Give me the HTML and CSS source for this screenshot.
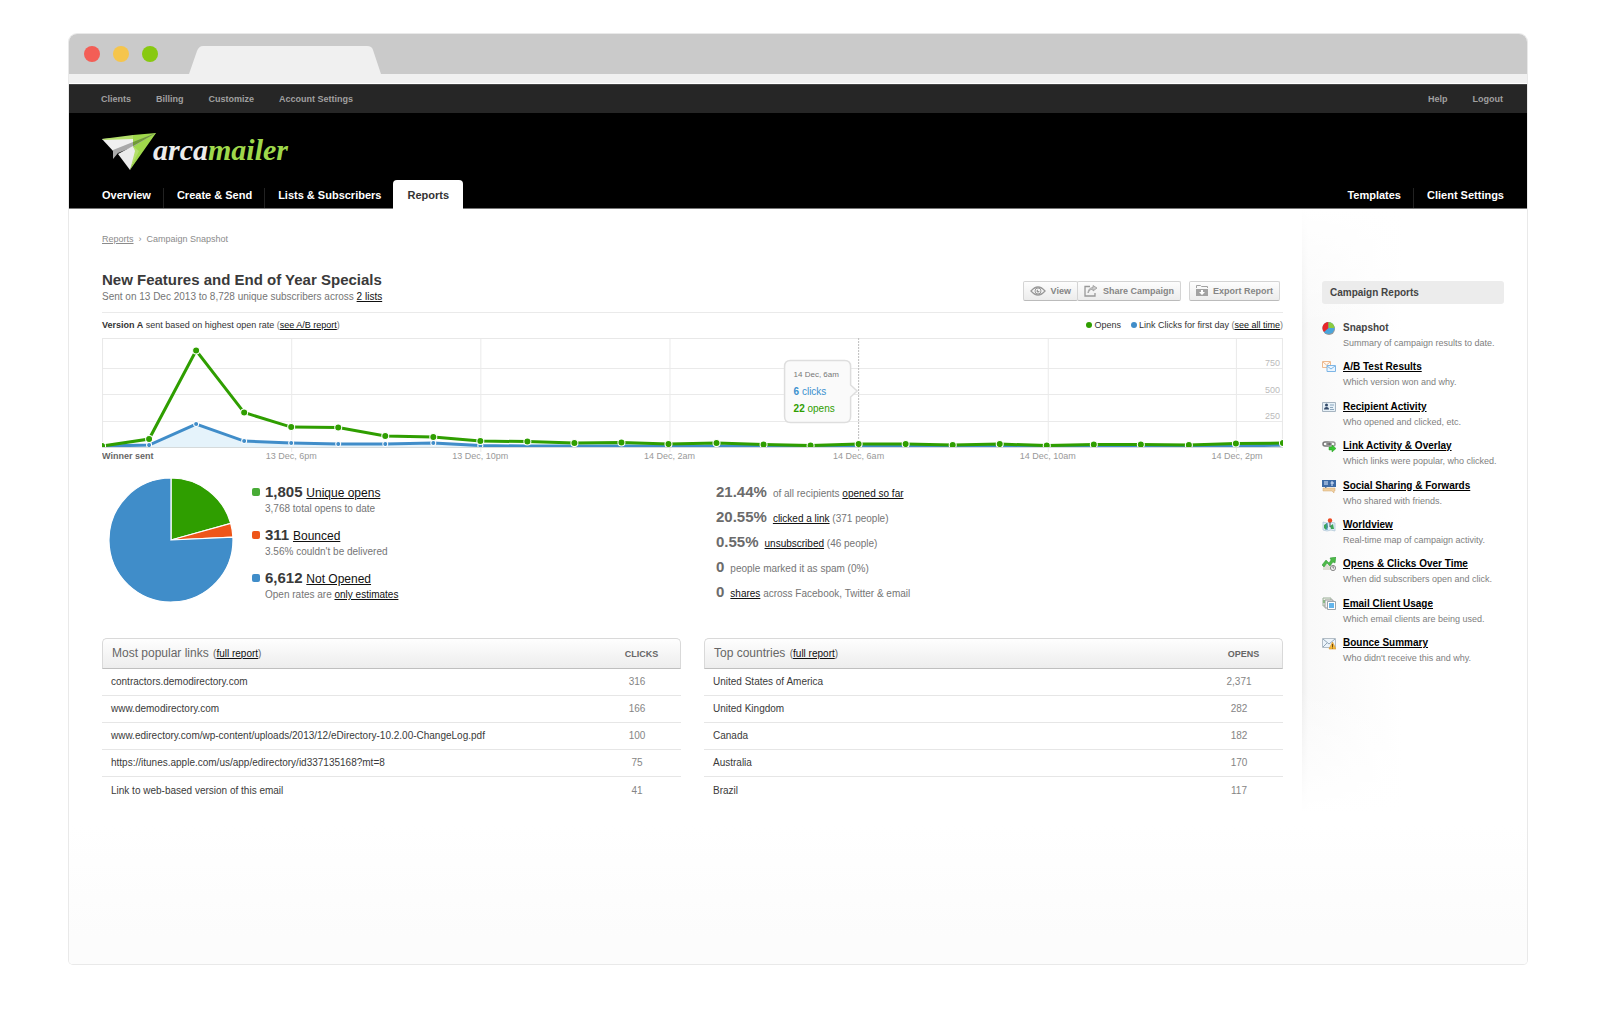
FILE: index.html
```html
<!DOCTYPE html>
<html lang="en">
<head>
<meta charset="utf-8">
<title>Campaign Snapshot</title>
<link rel="stylesheet" href="styles.css">
</head>
<body>
<div class="window">
  <div class="chrome">
    <span class="light light-red"></span>
    <span class="light light-yellow"></span>
    <span class="light light-green"></span>
    <svg class="chrome-tab" width="192" height="28" viewBox="0 0 192 28" aria-hidden="true"><path d="M0 28 8 5Q10 0 14 0H178Q183 0 184 4L192 28Z" fill="#f0f0f0"/></svg>
  </div>
  <div class="toolbar"></div>

  <header class="header">
    <nav class="account" aria-label="Account">
      <div class="account-group"><a href="#">Clients</a><a href="#">Billing</a><a href="#">Customize</a><a href="#">Account Settings</a></div>
      <div class="account-group"><a href="#">Help</a><a href="#">Logout</a></div>
    </nav>
    <a class="logo" href="#">
      <svg width="54" height="38" viewBox="0 0 54 38" aria-hidden="true">
        <path d="M0 6 31 4V14L12 19Z" fill="#f0f0f0"/>
        <path d="M0 6 31 2V6L2 7Z" fill="#b4df6b"/>
        <path d="M31 2 54 0 39 16 31 13Z" fill="#9fd84b"/>
        <path d="M11 17 31 9 54 0 31 14 16 20 11 26Z" fill="#a9a9a9"/>
        <path d="M16 21 31 13 35 18 28 37Z" fill="#ececec"/>
        <path d="M54 0 31 14 36 18 28 37Z" fill="#9fd84b"/>
        <path d="M31 13 37 18 28 37 33 18Z" fill="#b4df6b"/>
        <path d="M54 0 31 9V13Z" fill="#6f9a35"/>
      </svg>
      <span class="logo-text">arca<span class="logo-green">mailer</span></span>
    </a>
    <nav class="tabs" aria-label="Main">
      <div class="tab-group"><a href="#">Overview</a><a href="#">Create &amp; Send</a><a href="#">Lists &amp; Subscribers</a><a class="active" href="#">Reports</a></div>
      <div class="tab-group"><a href="#">Templates</a><a href="#">Client Settings</a></div>
    </nav>
  </header>

  <div class="page">
    <main class="main">
      <div class="crumbs"><a href="#">Reports</a><span class="crumb-arrow">›</span><span>Campaign Snapshot</span></div>

      <div class="heading">
        <div>
          <h1>New Features and End of Year Specials</h1>
          <p class="sent">Sent on 13 Dec 2013 to 8,728 unique subscribers across <a href="#">2 lists</a></p>
        </div>
        <div class="actions">
          <div class="button-pair">
            <button type="button"><svg width="16" height="12" viewBox="0 0 16 12" fill="none" stroke="#999" aria-hidden="true"><path d="M1 6Q8-2 15 6Q8 14 1 6Z" stroke-width="1.3"/><circle cx="8" cy="6" r="3"/><path d="M8 4.500A1.500 1.500 0 1 0 9.500 6H8Z" fill="#999" stroke="none"/></svg>View</button>
            <button type="button"><svg width="14" height="12" viewBox="0 0 14 12" fill="none" stroke="#999" stroke-width="1.300" aria-hidden="true"><path d="M6 1.500H1V11H11V8"/><path d="M4 8Q5 4 9 4V6L13 3 9 .5V2.500Q4 3 4 8Z" fill="#ccc" stroke-width=".8"/></svg>Share Campaign</button>
          </div>
          <button type="button"><svg width="12" height="12" viewBox="0 0 12 12" aria-hidden="true"><path d="M.5 3V.5H4.500L5.500 1.500H11.500V3" fill="none" stroke="#a2a2a2"/><path d="M0 4H12V11H0Z" fill="#a2a2a2"/><path d="M5 5H7V7H9L6 10 3 7H5Z" fill="#fff"/></svg>Export Report</button>
        </div>
      </div>

      <section class="chart">
        <div class="chart-head">
          <span><b>Version A</b> sent based on highest open rate <i>(</i><a href="#">see A/B report</a><i>)</i></span>
          <span class="chart-key"><span><span class="dot dot-green"></span>Opens</span><span><span class="dot dot-blue"></span>Link Clicks for first day <i>(</i><a href="#">see all time</a><i>)</i></span></span>
        </div>
        <svg class="plot" viewBox="0 0 1180 124" role="img" aria-label="Opens and link clicks over time">
          <defs>
            <clipPath id="area"><path d="M0 0H1180V109H0Z"/></clipPath>
          </defs>
          <path d="M0 30.500H1180M0 56.500H1180M0 83.500H1180M189.500 0V114M378.500 0V114M567.500 0V114M945.500 0V114M1133.500 0V114" stroke="#eaeaea" fill="none"/>
          <path d="M.5 109V.5H1179.500V109" stroke="#e8e8e8" fill="none"/>
          <path d="M0 109H1180" stroke="#d5dadb" stroke-width="2"/>
          <path d="M756 0V114" stroke="#bdbdbd" stroke-dasharray="2 1"/>
          <g class="axis" text-anchor="end"><text x="1177" y="28">750</text><text x="1177" y="55">500</text><text x="1177" y="81">250</text></g>
          <g clip-path="url(#area)">
            <path d="M0 108 47 107 94 86 142 103 189 105 236 106 283 106 331 105 378 107 472 108V109H0Z" fill="#e5f3fb"/>
            <path class="clicks" d="M0 108 47 107 94 86 142 103 189 105 236 106 283 106 331 105 378 107.500 425 108 1133 108 1180 107"/>
            <g class="click-dots"><circle cx="47" cy="107" r="2.500"/><circle cx="94" cy="86" r="2.500"/><circle cx="142" cy="103" r="2.500"/><circle cx="189" cy="105" r="2.500"/><circle cx="236" cy="106" r="2.500"/><circle cx="283" cy="106" r="2.500"/><circle cx="331" cy="105" r="2.500"/><circle cx="378" cy="107.500" r="2.500"/></g>
            <path class="opens" d="M0 108 47 101 94 12.500 142 74.500 189 89 236 89.500 283 98 331 99 378 103 425 103.500 472 105 519 104.500 566 106 614 105 661 106.500 708 107.500 756 106 803 106 850 107 897 106 944 107.500 991 106.500 1038 106.500 1086 107 1133 105.500 1180 105"/>
            <g class="open-dots"><circle cx="0" cy="108" r="3.500"/><circle cx="47" cy="101" r="3.500"/><circle cx="94" cy="12.500" r="3.500"/><circle cx="142" cy="74.500" r="3.500"/><circle cx="189" cy="89" r="3.500"/><circle cx="236" cy="89.500" r="3.500"/><circle cx="283" cy="98" r="3.500"/><circle cx="331" cy="99" r="3.500"/><circle cx="378" cy="103" r="3.500"/><circle cx="425" cy="103.500" r="3.500"/><circle cx="472" cy="105" r="3.500"/><circle cx="519" cy="104.500" r="3.500"/><circle cx="566" cy="106" r="3.500"/><circle cx="614" cy="105" r="3.500"/><circle cx="661" cy="106.500" r="3.500"/><circle cx="708" cy="107.500" r="3.500"/><circle cx="756" cy="106" r="3.500"/><circle cx="803" cy="106" r="3.500"/><circle cx="850" cy="107" r="3.500"/><circle cx="897" cy="106" r="3.500"/><circle cx="944" cy="107.500" r="3.500"/><circle cx="991" cy="106.500" r="3.500"/><circle cx="1038" cy="106.500" r="3.500"/><circle cx="1086" cy="107" r="3.500"/><circle cx="1133" cy="105.500" r="3.500"/><circle cx="1180" cy="105" r="3.500"/></g>
          </g>
          <g class="ticks" text-anchor="middle"><text x="189" y="121">13 Dec, 6pm</text><text x="378" y="121">13 Dec, 10pm</text><text x="567" y="121">14 Dec, 2am</text><text x="756" y="121">14 Dec, 6am</text><text x="945" y="121">14 Dec, 10am</text><text x="1134" y="121">14 Dec, 2pm</text></g>
          <text class="winner" x="0" y="121">Winner sent</text>
          <path d="M687 22.500H742Q748 22.500 748 28.500V47L754.500 53 748 59V78.500Q748 84.500 742 84.500H688Q682 84.500 682 78.500V28.500Q682 22.500 688 22.500Z" fill="#fafafa" stroke="#dedede" stroke-width="1.500"/>
          <text class="tip-date" x="691" y="39">14 Dec, 6am</text>
          <text class="tip-clicks" x="691" y="57"><tspan font-weight="bold">6</tspan> clicks</text>
          <text class="tip-opens" x="691" y="74"><tspan font-weight="bold">22</tspan> opens</text>
        </svg>
      </section>

      <section class="summary">
        <div class="recipients">
          <svg class="pie" width="126" height="126" viewBox="0 0 126 126" stroke="#fff" stroke-width="1.200" role="img" aria-label="Recipient breakdown">
            <path d="M63 63V1A62 62 0 0 1 122.700 46.400Z" fill="#2f9e00"/>
            <path d="M63 63 122.700 46.400A62 62 0 0 1 124.900 60.100Z" fill="#ee5519"/>
            <path d="M63 63 124.900 60.100A62 62 0 1 1 63 1Z" fill="#408dc9"/>
          </svg>
          <ul class="legend">
            <li><span class="swatch swatch-green"></span><div><b>1,805</b> <a href="#">Unique opens</a><p>3,768 total opens to date</p></div></li>
            <li><span class="swatch swatch-orange"></span><div><b>311</b> <a href="#">Bounced</a><p>3.56% couldn't be delivered</p></div></li>
            <li><span class="swatch swatch-blue"></span><div><b>6,612</b> <a href="#">Not Opened</a><p>Open rates are <a href="#">only estimates</a></p></div></li>
          </ul>
        </div>
        <ul class="stats">
          <li><b>21.44%</b><span>of all recipients <a href="#">opened so far</a></span></li>
          <li><b>20.55%</b><span><a href="#">clicked a link</a> (371 people)</span></li>
          <li><b>0.55%</b><span><a href="#">unsubscribed</a> (46 people)</span></li>
          <li><b>0</b><span>people marked it as spam (0%)</span></li>
          <li><b>0</b><span><a href="#">shares</a> across Facebook, Twitter &amp; email</span></li>
        </ul>
      </section>

      <div class="tables">
        <table>
          <thead><tr><th scope="col">Most popular links <small>(<a href="#">full report</a>)</small></th><th scope="col" class="count">CLICKS</th></tr></thead>
          <tbody>
            <tr><td>contractors.demodirectory.com</td><td>316</td></tr>
            <tr><td>www.demodirectory.com</td><td>166</td></tr>
            <tr><td>www.edirectory.com/wp-content/uploads/2013/12/eDirectory-10.2.00-ChangeLog.pdf</td><td>100</td></tr>
            <tr><td>https://itunes.apple.com/us/app/edirectory/id337135168?mt=8</td><td>75</td></tr>
            <tr><td>Link to web-based version of this email</td><td>41</td></tr>
          </tbody>
        </table>
        <table>
          <thead><tr><th scope="col">Top countries <small>(<a href="#">full report</a>)</small></th><th scope="col" class="count">OPENS</th></tr></thead>
          <tbody>
            <tr><td>United States of America</td><td>2,371</td></tr>
            <tr><td>United Kingdom</td><td>282</td></tr>
            <tr><td>Canada</td><td>182</td></tr>
            <tr><td>Australia</td><td>170</td></tr>
            <tr><td>Brazil</td><td>117</td></tr>
          </tbody>
        </table>
      </div>
    </main>

    <aside class="sidebar">
      <h2>Campaign Reports</h2>
      <ul class="reports">
        <li>
          <svg width="14" height="14" viewBox="0 0 14 14" aria-hidden="true"><ellipse cx="7" cy="8" rx="6" ry="6" fill="#999"/><circle cx="6.500" cy="7" r="6" fill="#4aa5dc"/><path d="M6.500 7V1A6 6 0 0 0 2 11Z" fill="#e8262a"/><path d="M6.500 7V1A6 6 0 0 1 12.500 7Z" fill="#8ccb3f"/></svg>
          <div><span class="current">Snapshot</span><p>Summary of campaign results to date.</p></div>
        </li>
        <li>
          <svg width="14" height="14" viewBox="0 0 14 14" fill="none" aria-hidden="true"><path d="M.5 1.500H8.500V7.500H.5Z" fill="#fff8f1" stroke="#edb98f"/><path d="M1 2 4.500 5 8 2" stroke="#edb98f"/><path d="M5 5.500H13.500V11.500H5Z" fill="#eaf5ff" stroke="#7db5e5"/><path d="M5 6 9 9 13 6" stroke="#7db5e5"/></svg>
          <div><a href="#">A/B Test Results</a><p>Which version won and why.</p></div>
        </li>
        <li>
          <svg width="14" height="14" viewBox="0 0 14 14" aria-hidden="true"><path d="M.5 2.500H13.500V11.500H.5Z" fill="#e7f1f8" stroke="#a6b4c0"/><circle cx="4.500" cy="5" r="1.500" fill="#344b6a"/><path d="M2 9.500Q2 7 4.500 7T7 9.500Z" fill="#344b6a"/><path d="M8 5H12M8 7.500H11M8 9.500H12" stroke="#8ba6bd"/></svg>
          <div><a href="#">Recipient Activity</a><p>Who opened and clicked, etc.</p></div>
        </li>
        <li>
          <svg width="14" height="14" viewBox="0 0 14 14" fill="none" aria-hidden="true"><rect x="1" y="3" width="7" height="4" rx="2" stroke="#777" stroke-width="1.500"/><rect x="6" y="3" width="7" height="4" rx="2" stroke="#999" stroke-width="1.500"/><path d="M4 5H10" stroke="#555"/><path d="M7 8H10V6L14 9.500 10 13V11H7Z" fill="#38c431" stroke="#249c20" stroke-width=".5"/></svg>
          <div><a href="#">Link Activity &amp; Overlay</a><p>Which links were popular, who clicked.</p></div>
        </li>
        <li>
          <svg width="14" height="14" viewBox="0 0 14 14" aria-hidden="true"><path d="M0 1H14V8H5L3 10V8H0Z" fill="#3e6ba5"/><path d="M2 3H6M2 5H6M10 2V7M8.500 4H12" stroke="#dfecff"/><path d="M1 9H13V12H12V14L10 12H1Z" fill="#f0cfa0" stroke="#d7a970" stroke-width=".5"/></svg>
          <div><a href="#">Social Sharing &amp; Forwards</a><p>Who shared with friends.</p></div>
        </li>
        <li>
          <svg width="14" height="14" viewBox="0 0 14 14" aria-hidden="true"><path d="M1 4 5 5 9 4 13 5V13L9 12 5 13 1 12Z" fill="#dfeefa" stroke="#abc1d2" stroke-width=".7"/><path d="M2 7 5 5 6 9 4 12 2 10ZM8 8 11 6 12 11 9 11Z" fill="#3da657"/><path d="M5 5V12" stroke="#4588c5"/><circle cx="8" cy="2.500" r="2.200" fill="#ed4a24"/><path d="M8 4V9" stroke="#555"/></svg>
          <div><a href="#">Worldview</a><p>Real-time map of campaign activity.</p></div>
        </li>
        <li>
          <svg width="14" height="14" viewBox="0 0 14 14" aria-hidden="true"><path d="M1 10V13H8V8L4 7Z" fill="#deded5"/><path d="M0 8 4 3 7 6 9 3 8 1 14 0 13 6 11 5 8 9 5 6 2 10Z" fill="#4cba47" stroke="#2d8f32" stroke-width=".5"/><circle cx="11" cy="11" r="2.600" fill="#eee" stroke="#888"/><path d="M11 9V11H12" fill="none" stroke="#555" stroke-width=".7"/></svg>
          <div><a href="#">Opens &amp; Clicks Over Time</a><p>When did subscribers open and click.</p></div>
        </li>
        <li>
          <svg width="14" height="14" viewBox="0 0 14 14" aria-hidden="true"><path d="M1 1H9V9H1Z" fill="#edf4e8" stroke="#9daf9b"/><path d="M3 3H11V11H3Z" fill="#f5f5f5" stroke="#999"/><path d="M5.500 4.500H13.500V12.500H5.500Z" fill="#fff" stroke="#9ba4ab"/><path d="M7 6H12V11H7Z" fill="#63b5ec"/><path d="M2 3V6" stroke="#4fa24d"/></svg>
          <div><a href="#">Email Client Usage</a><p>Which email clients are being used.</p></div>
        </li>
        <li>
          <svg width="14" height="14" viewBox="0 0 14 14" aria-hidden="true"><path d="M.5 2.500H13.500V11.500H.5Z" fill="#edf4fa" stroke="#b3bdc6"/><path d="M1 3 7 8 13 3M1 11 5 7" fill="none" stroke="#94a7b8"/><path d="M10.500 6 14 13H7Z" fill="#f6bd3a" stroke="#d5912b" stroke-width=".6"/><path d="M10.500 8V11M10.500 11.500V12.500" stroke="#71460d"/></svg>
          <div><a href="#">Bounce Summary</a><p>Who didn't receive this and why.</p></div>
        </li>
      </ul>
    </aside>
  </div>
</div>
</body>
</html>
```
FILE: styles.css
```css
* { box-sizing: border-box; }
body { margin: 0; padding: 34px 73px 64px 69px; background: #fff; color: #333; font: 10px/16px "Liberation Sans", Arial, sans-serif; }
h1, h2, p, ul { margin: 0; padding: 0; }
ul { list-style: none; }
a { color: #111; text-decoration: underline; text-decoration-thickness: 1px; text-underline-offset: 1px; }
svg { display: block; flex: none; }

.window { display: flex; flex-direction: column; min-height: calc(100vh - 98px); border-radius: 8px 8px 4px 4px; box-shadow: 0 0 0 1px #e9e9e9; background: linear-gradient(#fff 85%, #fcfcfc 97%); overflow: hidden; }
.chrome { display: flex; align-items: center; gap: 13px; height: 40px; padding-left: 15px; background: #cacaca; }
.light { width: 16px; height: 16px; border-radius: 50%; }
.light-red { background: #f35e56; }
.light-yellow { background: #f5c54c; }
.light-green { background: #88c910; }
.chrome-tab { align-self: flex-end; margin-left: 18px; }
.toolbar { height: 10px; background: #f0f0f0; border-bottom: 1px solid #fff; }

.header { background: #000; border-bottom: 1px solid #777; }
.header a { text-decoration: none; }
.account { display: flex; justify-content: space-between; height: 29px; padding: 0 24px 0 32px; background: #262626; border-top: 1px solid #444; }
.account-group { display: flex; align-items: center; gap: 25px; }
.account a { color: #a0a0a0; font-size: 9px; font-weight: bold; }
.logo { display: flex; align-items: flex-start; width: max-content; height: 67px; padding: 20px 0 0 33px; }
.logo-text { margin-left: -3px; padding-top: 3px; color: #ececec; font: italic bold 30px/28px "Liberation Serif", serif; }
.logo-green { color: #9fd84b; }
.tabs { display: flex; justify-content: space-between; height: 28px; padding: 0 11px 0 20px; }
.tab-group { display: flex; }
.tabs a { padding: 0 12px 0 13px; color: #fff; font-size: 11px; font-weight: bold; line-height: 31px; }
.tabs a + a { border-left: 1px solid; border-image: linear-gradient(transparent 8px, #222 8px) 1; }
.tabs a.active { height: 29px; padding: 0 14px; border: 0; border-radius: 4px 4px 0 0; background: #fff; color: #333; }

.page { display: flex; flex: 1; align-items: flex-start; padding: 0 23px 0 33px; }
.main { flex: 1; min-width: 0; padding-top: 22px; }
.crumbs { display: flex; gap: 5px; color: #8b8b8b; font-size: 9px; }
.crumbs a { color: #8b8b8b; }

.heading { display: flex; justify-content: space-between; margin-top: 24px; padding-bottom: 7px; border-bottom: 1px solid #eaeaea; }
h1 { color: #3a3a3a; font-size: 15px; line-height: 18px; }
.sent { color: #757575; }
.actions { display: flex; gap: 8px; padding: 10px 3px 0 0; align-items: flex-start; }
.button-pair { display: flex; }
button { display: flex; align-items: center; gap: 5px; height: 20px; padding: 0 6px; border: 1px solid #d4d4d4; border-bottom-color: #bbb; border-radius: 2px; background: linear-gradient(#fdfdfd, #ececec); color: #858585; font: bold 9px/16px "Liberation Sans", Arial, sans-serif; }
.button-pair button + button { margin-left: -1px; }

.chart-head { display: flex; justify-content: space-between; padding: 4px 0 5px; font-size: 9px; }
.chart i { color: #777; font-style: normal; }
.chart-key { display: flex; gap: 10px; }
.dot { display: inline-block; width: 6px; height: 6px; margin-right: 2px; border-radius: 50%; }
.dot-green { background: #2f9e00; }
.dot-blue { background: #408dc9; }
.plot { width: 100%; height: auto; }
.plot text { font-size: 9px; fill: #999; }
.plot .axis text { fill: #bbb; }
.plot .winner { font-weight: bold; fill: #666; }
.plot .tip-date { font-size: 8px; fill: #777; }
.plot .tip-clicks { font-size: 10px; fill: #3a91cf; }
.plot .tip-opens { font-size: 10px; fill: #2f9e00; }
.clicks { fill: none; stroke: #408dc9; stroke-width: 3; }
.opens { fill: none; stroke: #2f9e00; stroke-width: 3; }
.click-dots { fill: #408dc9; stroke: #fff; }
.open-dots { fill: #2f9e00; stroke: #fff; }

.summary { display: grid; grid-template-columns: 1fr 1fr; gap: 23px; margin-top: 15px; }
.recipients { display: flex; gap: 18px; padding-left: 6px; }
.legend { padding-top: 7px; }
.legend li { display: flex; gap: 5px; height: 43px; color: #757575; line-height: 16px; }
.legend li:last-child { height: 32px; }
.legend b { margin-right: 1px; color: #3a3a3a; font-size: 15px; }
.legend p { margin-top: -1px; }
.legend div > a { font-size: 12px; }
.swatch { width: 8px; height: 8px; margin-top: 4px; border-radius: 2px; }
.swatch-green { background: #48ab36; }
.swatch-orange { background: #ee5519; }
.swatch-blue { background: #408dc9; }
.stats { padding: 5px 0 0 12px; color: #757575; }
.stats li { display: flex; gap: 6px; align-items: baseline; height: 25px; line-height: 20px; }
.stats b { color: #6b6b6b; font-size: 15px; }

.tables { display: grid; grid-template-columns: 1fr 1fr; gap: 23px; margin-top: 31px; align-items: start; }
table { width: 100%; border-spacing: 0; }
th { height: 31px; padding: 0 0 0 9px; border: 1px solid #d9d9d9; border-width: 1px 0 1px 1px; border-bottom-color: #bfbfbf; border-radius: 5px 0 0 0; background: linear-gradient(#fefefe, #ededed); color: #666; font-size: 12px; font-weight: normal; text-align: left; }
th small { margin-left: 1px; font-size: 10px; }
th.count { width: 88px; padding: 0 0 0 10px; border-width: 1px 1px 1px 0; border-radius: 0 5px 0 0; font-size: 9px; font-weight: bold; text-align: center; }
td { height: 27px; padding: 0 0 0 9px; border-bottom: 1px solid #e6e6e6; color: #3a3a3a; }
td + td { padding: 0; color: #858585; text-align: center; }
tr:last-child td { border-bottom: 0; }

.sidebar { width: 202px; min-height: 604px; margin-left: 19px; padding: 72px 0 0 20px; background: linear-gradient(#fff, transparent 120px, transparent 480px, #fff), linear-gradient(90deg, #eee, #f9f9f9 6px, #fff 100px); }
h2 { padding: 0 8px; border-radius: 3px; background: #ececec; color: #444; font-size: 10px; line-height: 23px; }
.reports { display: grid; align-content: space-between; min-height: 347px; margin-top: 16px; }
.reports li { display: flex; gap: 7px; height: 32px; }
.reports svg { margin-top: 1px; }
.reports a, .current { color: #000; font-weight: bold; }
.reports .current { color: #444; }
.reports p { color: #808080; font-size: 9px; line-height: 15px; white-space: nowrap; }
```
